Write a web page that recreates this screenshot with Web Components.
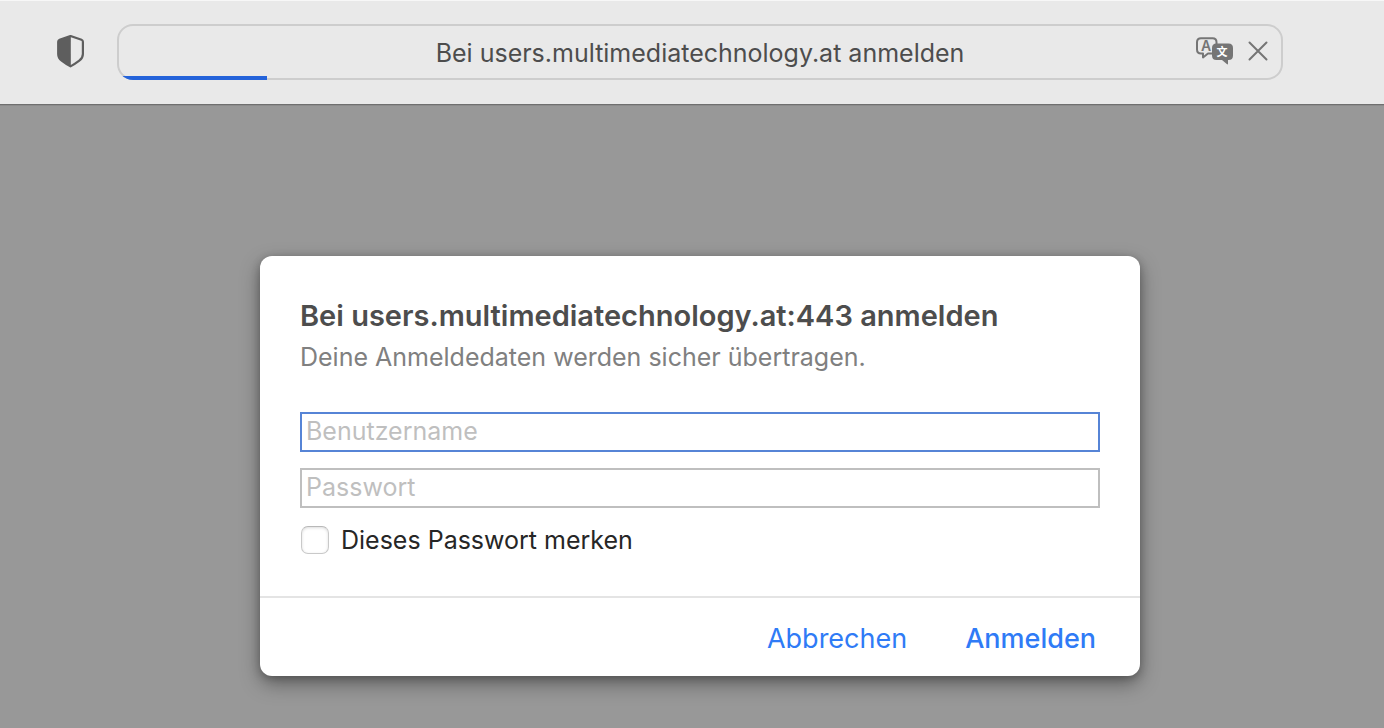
<!DOCTYPE html>
<html lang="de">
<head>
<meta charset="utf-8">
<meta name="viewport" content="width=device-width, initial-scale=1">
<title>Bei users.multimediatechnology.at anmelden</title>
<style>
  html, body { height: 100%; margin: 0; }
  body { font-family: Inter, "Noto Sans", "Noto Sans CJK SC", sans-serif; font-size: 25px; line-height: 32px; }
</style>
</head>
<body>
<browser-window>
  <browser-toolbar slot="toolbar">
    <address-field>Bei users.multimediatechnology.at anmelden</address-field>
  </browser-toolbar>
  <login-dialog>
    <span slot="title">Bei users.multimediatechnology.at:443 anmelden</span>
    <span slot="message">Deine Anmeldedaten werden sicher übertragen.</span>
    <login-field slot="fields" class="active" label="Benutzername" type="text"></login-field>
    <login-field slot="fields" label="Passwort" type="password"></login-field>
    <check-option slot="fields">Dieses Passwort merken</check-option>
    <dialog-button slot="actions">Abbrechen</dialog-button>
    <dialog-button slot="actions" class="primary">Anmelden</dialog-button>
  </login-dialog>
</browser-window>

<script>
class BaseElement extends HTMLElement {
  constructor() {
    super();
    this.attachShadow({ mode: "open" }).innerHTML = this.constructor.markup;
  }
}

customElements.define("browser-window", class extends BaseElement {
  static markup = `
    <style>
      :host { display: flex; flex-direction: column; min-height: 100%; background: #989898; }
      main { flex: 1; box-sizing: border-box; display: flex; justify-content: center; align-items: flex-start; padding: 151px 0 52px 16px; }
    </style>
    <slot name="toolbar"></slot>
    <main><slot></slot></main>`;
});

customElements.define("browser-toolbar", class extends BaseElement {
  static markup = `
    <style>
      :host { display: block; background: #e9e9e9; border-top: 1px solid #f7f7f7; border-bottom: 1px solid #6f6f6f; box-shadow: 0 1px 0 #8c8c8c; }
      header { display: flex; align-items: center; gap: 32px; padding: 23px 101px 24px 57px; }
      button { flex: none; display: flex; border: 0; padding: 0; background: none; color: #5e5e5e; }
      ::slotted(*) { flex: 1; min-width: 0; }
    </style>
    <header>
      <button type="button" aria-label="Datenschutzbericht">
        <svg width="28" height="34" viewBox="1 1 28 34" aria-hidden="true">
          <path d="M14.500 2 25.500 5.800Q26.900 6.300 26.900 7.800V20Q26.900 24 23.300 26.700 19 30 14.500 32.400 10 30 5.700 26.700 2.200 24 2.200 20V7.800Q2.200 6.300 3.600 5.800Z" fill="none" stroke="currentColor" stroke-width="2.200" stroke-linejoin="round"/>
          <path d="M14.800 2V32.400Q10 30 5.700 26.700 2.200 24 2.200 20V7.800Q2.200 6.300 3.600 5.800Z" fill="currentColor"/>
        </svg>
      </button>
      <slot></slot>
    </header>`;
});

customElements.define("address-field", class extends BaseElement {
  static markup = `
    <style>
      :host { display: block; }
      .field { position: relative; box-sizing: border-box; display: grid; grid-template-columns: 86px 1fr 86px; align-items: center; min-height: 56px; border: 2px solid #cdcdcd; border-radius: 16px; color: #4d4d4d; }
      .title { grid-column: 2; padding-top: 2px; text-align: center; white-space: nowrap; }
      .tools { display: flex; align-items: center; justify-content: flex-end; gap: 15px; padding-right: 13px; padding-bottom: 2px; }
      button { display: flex; border: 0; padding: 0; background: none; color: #757575; }
      .clip { position: absolute; inset: -2px; overflow: hidden; border-radius: 16px; pointer-events: none; }
      .bar { position: absolute; left: 0; bottom: 0; width: 150px; height: 4px; background: #2463da; }
      text { font-family: Inter, "Noto Sans CJK SC", sans-serif; text-anchor: middle; }
    </style>
    <div class="field">
      <div class="title"><slot></slot></div>
      <div class="tools">
        <button type="button" aria-label="Übersetzen">
          <svg width="38" height="28" viewBox="0 0 38 28" aria-hidden="true">
            <path d="M17 16.500H13L8 20.500V16.500H6Q2 16.500 2 12.500V5.200Q2 1.200 6 1.200H17.500Q21.500 1.200 21.500 5.200V7" fill="none" stroke="currentColor" stroke-width="2" stroke-linejoin="round"/>
            <path d="M21.500 6.500H33.500Q38 6.500 38 11V18.500Q38 23 33.500 23H33V26.500Q33 28 31.800 27L27 23H21.500Q17 23 17 18.500V11Q17 6.500 21.500 6.500Z" fill="currentColor"/>
            <text x="11" y="14" font-size="14" font-weight="600" fill="currentColor">A</text>
            <text x="27" y="19" font-size="11" font-weight="700" fill="#fff">文</text>
          </svg>
        </button>
        <button type="button" aria-label="Laden stoppen">
          <svg width="20" height="20" viewBox="0 0 20 20" aria-hidden="true"><path d="M1.500 1.500 18.500 18.500M18.500 1.500 1.500 18.500" fill="none" stroke="currentColor" stroke-width="2" stroke-linecap="round"/></svg>
        </button>
      </div>
      <div class="clip"><div class="bar"></div></div>
    </div>`;
});

customElements.define("login-dialog", class extends BaseElement {
  static markup = `
    <style>
      :host { display: block; box-sizing: border-box; width: 100%; max-width: 880px; }
      form { background: #fff; border-radius: 12px; box-shadow: 0 8px 20px rgba(0,0,0,.36), 0 2px 8px rgba(0,0,0,.24); }
      .body { padding: 40px; }
      h1 { margin: 0; font-size: 29px; line-height: 40px; font-weight: 600; color: #4d4d4d; }
      p { margin: 5px 0 0; line-height: 32px; color: #808080; }
      .fields { display: flex; flex-direction: column; gap: 16px; margin-top: 39px; }
      footer { display: flex; justify-content: flex-end; gap: 58px; padding: 25px 44px 21px 40px; border-top: 2px solid #e4e4e4; }
    </style>
    <form role="dialog" aria-labelledby="heading" onsubmit="return false">
      <div class="body">
        <h1 id="heading"><slot name="title"></slot></h1>
        <p><slot name="message"></slot></p>
        <div class="fields"><slot name="fields"></slot></div>
      </div>
      <footer><slot name="actions"></slot></footer>
    </form>`;
});

customElements.define("login-field", class extends BaseElement {
  static markup = `
    <style>
      :host { display: block; }
      input { display: block; box-sizing: border-box; width: 100%; height: 40px; margin: 0; padding: 0 4px 2px; border: 2px solid #bfbfbf; border-radius: 0; background: #fff; font: inherit; line-height: 32px; color: #262626; outline: none; }
      :host(.active) input, input:focus { border-color: #5684d6; }
      input::placeholder { color: #bfbfbf; opacity: 1; }
    </style>
    <input>`;
  connectedCallback() {
    const input = this.shadowRoot.querySelector("input");
    const label = this.getAttribute("label");
    input.type = this.getAttribute("type");
    input.placeholder = label;
    input.setAttribute("aria-label", label);
  }
});

customElements.define("check-option", class extends BaseElement {
  static markup = `
    <style>
      :host { display: block; color: #262626; }
      label { display: flex; align-items: center; gap: 12px; padding-left: 1px; }
      input { appearance: none; flex: none; box-sizing: border-box; width: 28px; height: 28px; margin: 0; border: 1px solid #c9c9c9; border-top-color: #b8b8b8; border-radius: 7px; background: #fff; box-shadow: inset 0 1px 3px rgba(0,0,0,.14); }
      input:checked { background: #2f7bf6; }
    </style>
    <label><input type="checkbox"><span><slot></slot></span></label>`;
});

customElements.define("dialog-button", class extends BaseElement {
  static markup = `
    <style>
      :host { display: block; }
      button { display: block; margin: 0; padding: 0; border: 0; background: none; font: inherit; font-size: 27px; line-height: 32px; color: #2f7bf6; }
      :host(.primary) button { font-weight: 500; }
    </style>
    <button type="button"><slot></slot></button>`;
});
</script>
</body>
</html>
